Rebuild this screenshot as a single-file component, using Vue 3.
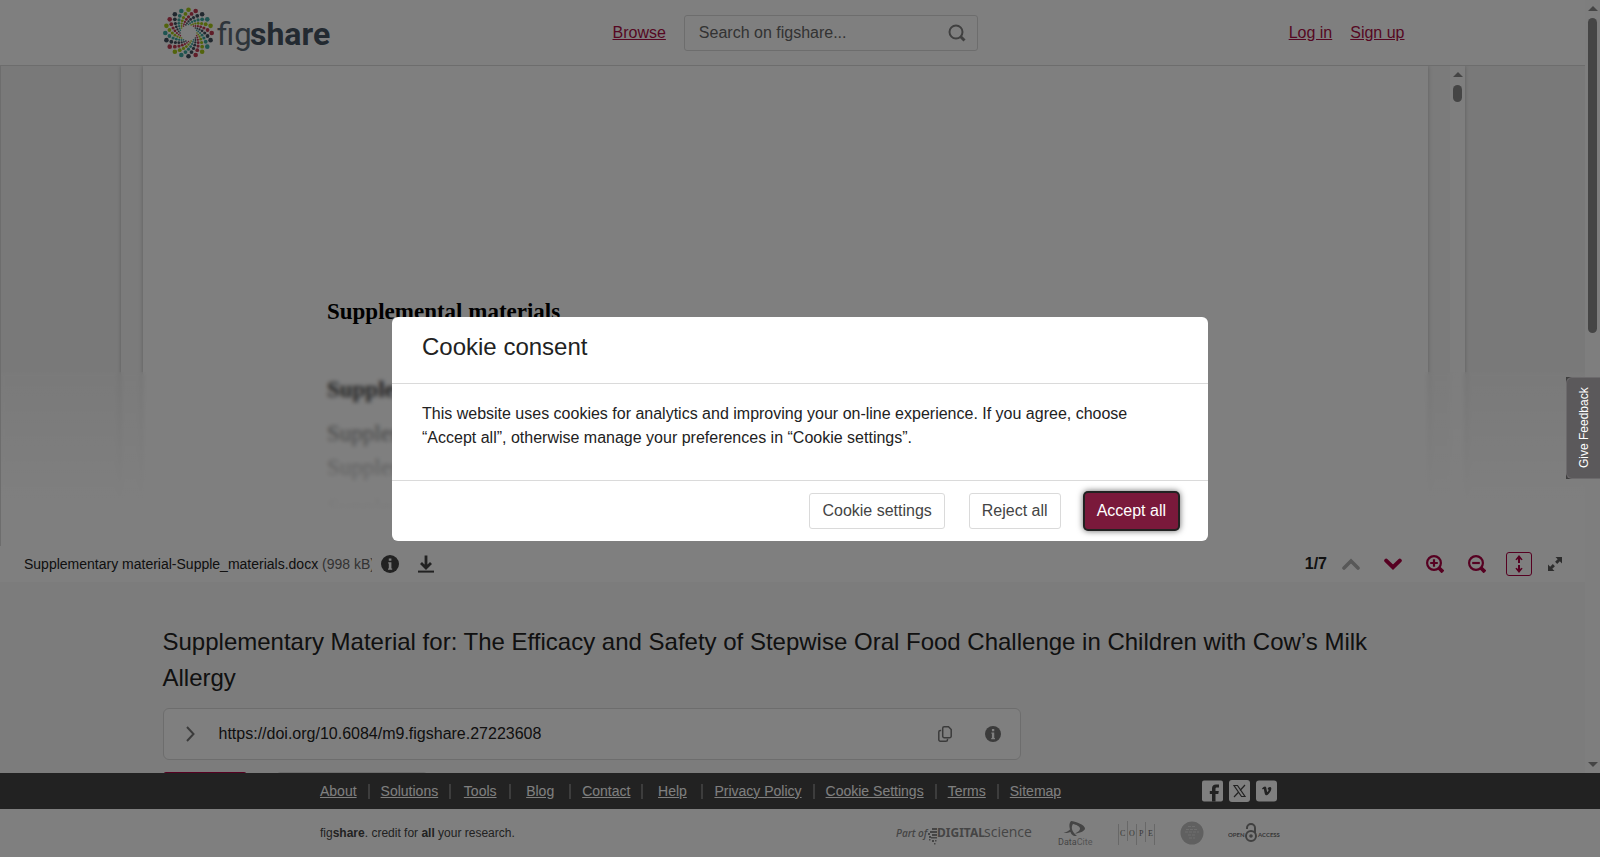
<script setup>
import { ref } from 'vue'

const query = ref('')
const palette = ['#a6c81a', '#c03a52', '#43505e', '#3fa8a0']
const rings = [
  [23.2, 2.3], [19.3, 1.9], [16.2, 1.6], [13.7, 1.4], [11.6, 1.1], [9.9, 0.9], [8.5, 0.8]
]
const dots = []
for (let arm = 0; arm < 20; arm++) {
  rings.forEach(([radius, size], ring) => {
    const angle = ((arm * 18 - ring * 9) * Math.PI) / 180
    dots.push({
      x: 25.5 + radius * Math.sin(angle),
      y: 27 - radius * Math.cos(angle),
      r: size,
      fill: palette[arm % 4]
    })
  })
}

const footerLinks = [
  'About', 'Solutions', 'Tools', 'Blog', 'Contact', 'Help',
  'Privacy Policy', 'Cookie Settings', 'Terms', 'Sitemap'
]
</script>

<template>
  <div class="app">
    <div class="main">
      <div class="content">
        <header class="header">
          <div class="container header-row">
            <a class="logo" href="#" aria-label="figshare">
              <svg width="170" height="53" viewBox="0 0 170 53">
                <circle v-for="(d, i) in dots" :key="i" :cx="d.x" :cy="d.y" :r="d.r" :fill="d.fill" />
                <text x="54" y="39" class="logo-fig">fig</text>
                <text x="87" y="39" class="logo-share">share</text>
              </svg>
            </a>
            <a class="link" href="#">Browse</a>
            <form class="search" @submit.prevent>
              <input v-model="query" type="text" aria-label="Search on figshare" placeholder="Search on figshare..." />
              <button type="submit" aria-label="Search">
                <svg width="18" height="18" viewBox="0 0 18 18" fill="none" stroke="#808080" stroke-width="2">
                  <circle cx="8" cy="8" r="6.500" />
                  <path d="M12.500 12.500l4 4" stroke-width="3" />
                </svg>
              </button>
            </form>
            <nav class="account">
              <a class="link" href="#">Log in</a>
              <a class="link" href="#">Sign up</a>
            </nav>
          </div>
        </header>

        <section class="viewer" aria-label="File preview">
          <div class="frame">
            <div class="sheet-area">
              <article class="sheet">
                <h2>Supplemental materials</h2>
                <p class="strong">Supplemental</p>
                <p class="tight">Supplemental</p>
                <p>Supplemental</p>
                <p>Supplemental</p>
              </article>
            </div>
            <div class="scrollbar">
              <span class="arrow-up"></span>
              <span class="thumb thumb-small"></span>
            </div>
          </div>
          <div class="fade"></div>
        </section>

        <div class="toolbar">
          <div class="filename">Supplementary material-Supple_materials.docx <span>(998 kB)</span></div>
          <button class="icon info" aria-label="File information">
            <svg width="18" height="18" viewBox="0 0 18 18">
              <circle cx="9" cy="9" r="9" fill="#444" />
              <path d="M7.200 7.200h3.200v6.200h.8v1.400H7v-1.400h.8V8.600h-.6zM7.800 3.400h2.600v2.400H7.800z" fill="#fff" />
            </svg>
          </button>
          <button class="icon download" aria-label="Download file">
            <svg width="16" height="18" viewBox="0 0 16 18" fill="none" stroke="#444">
              <path d="M8 0.500v12M3 8l5 5 5-5" stroke-width="2.800" />
              <path d="M0 16.600h16" stroke-width="2" />
            </svg>
          </button>
          <div class="tools">
            <strong>1/7</strong>
            <button class="icon" aria-label="Previous page">
              <svg width="18" height="12" viewBox="0 0 18 12" fill="none" stroke="#b0b0b0" stroke-width="3.600"><path d="M2 10l7-7 7 7" stroke-linecap="round" /></svg>
            </button>
            <button class="icon" aria-label="Next page">
              <svg width="18" height="12" viewBox="0 0 18 12" fill="none" stroke="#ad0042" stroke-width="4"><path d="M2.200 2.600l6.800 6.600 6.800-6.600" stroke-linecap="round" /></svg>
            </button>
            <button class="icon" aria-label="Zoom in">
              <svg width="18" height="18" viewBox="0 0 18 18" fill="none" stroke="#ad0042" stroke-width="2.200">
                <circle cx="8" cy="8" r="6.900" /><path d="M8 4.200v7.600M4.200 8h7.600" /><path d="M13 13l4 4" stroke-width="3.800" />
              </svg>
            </button>
            <button class="icon" aria-label="Zoom out">
              <svg width="18" height="18" viewBox="0 0 18 18" fill="none" stroke="#ad0042" stroke-width="2.200">
                <circle cx="8" cy="8" r="6.900" /><path d="M4.200 8h7.600" /><path d="M13 13l4 4" stroke-width="3.800" />
              </svg>
            </button>
            <button class="icon boxed" aria-label="Fit to height">
              <svg width="8" height="18" viewBox="0 0 8 18" fill="#ad0042">
                <path d="M4 0l3.600 4.400-1 .9L5 4v4H3V4L1.400 5.300l-1-.9zM4 18l3.600-4.400-1-.9L5 14v-4H3v4l-1.600-1.300-1 .9z" />
              </svg>
            </button>
            <button class="icon" aria-label="Full screen">
              <svg width="14" height="14" viewBox="0 0 14 14">
                <path d="M7.500 0H14v6.500L11.800 4.300 9.200 6.900 7.100 4.800l2.600-2.600zM6.500 14H0V7.500l2.200 2.200 2.600-2.600 2.100 2.100-2.600 2.600z" fill="#5a5a5a" />
              </svg>
            </button>
          </div>
        </div>

        <section class="container details">
          <h1>Supplementary Material for: The Efficacy and Safety of Stepwise Oral Food Challenge in Children with Cow’s Milk Allergy</h1>
          <div class="doi">
            <button class="icon" aria-label="Expand citation">
              <svg width="9" height="16" viewBox="0 0 9 16" fill="none" stroke="#777" stroke-width="2"><path d="M1 1l6.500 7L1 15" /></svg>
            </button>
            <span class="doi-text">https://doi.org/10.6084/m9.figshare.27223608</span>
            <button class="icon" aria-label="Copy DOI">
              <svg width="14" height="16" viewBox="0 0 14 16" fill="none" stroke="#777" stroke-width="1.500">
                <path d="M6.500.8h4l2.700 2.700v6.700a1.500 1.500 0 0 1-1.500 1.500H6.200a1.500 1.500 0 0 1-1.500-1.500V2.300A1.500 1.500 0 0 1 6.200.8z" />
                <path d="M3.200 4.500H2.300A1.500 1.500 0 0 0 .8 6v7.700a1.500 1.500 0 0 0 1.500 1.500H8a1.500 1.500 0 0 0 1.500-1.500v-.9" />
              </svg>
            </button>
            <button class="icon" aria-label="DOI information">
              <svg width="16" height="16" viewBox="0 0 18 18">
                <circle cx="9" cy="9" r="9" fill="#777" />
                <path d="M7.200 7.200h3.200v6.200h.8v1.400H7v-1.400h.8V8.600h-.6zM7.800 3.400h2.600v2.400H7.800z" fill="#fff" />
              </svg>
            </button>
          </div>
          <div class="actions">
            <span class="action primary"></span>
            <span class="action"></span>
          </div>
        </section>
      </div>
      <div class="scrollbar">
        <span class="arrow-up"></span>
        <span class="thumb thumb-page"></span>
        <span class="arrow-down"></span>
      </div>
    </div>

    <footer>
      <div class="footer-dark">
        <div class="footer-container">
          <ul class="footer-links">
            <li v-for="label in footerLinks" :key="label"><a href="#">{{ label }}</a></li>
          </ul>
          <div class="social">
            <a href="#" aria-label="Facebook">
              <svg width="21" height="22" viewBox="0 0 21 22">
                <rect y="0.500" width="21" height="21" rx="2" fill="#fff" />
                <path d="M10 21.500V14H7.800v-3H10V8.500C10 6 11.500 4.500 14 4.500h3v3h-2c-1 0-1.500.5-1.500 1.400V11h3.300l-.5 3h-2.800v7.500z" fill="#444" />
              </svg>
            </a>
            <a href="#" aria-label="X">
              <svg width="21" height="22" viewBox="0 0 21 22">
                <rect width="21" height="22" rx="3" fill="#fff" />
                <path d="M5 5.500h3.500l7.500 11h-3.500zM16 5l-5 5.500M9.700 12L5 17" fill="none" stroke="#444" stroke-width="1.200" />
              </svg>
            </a>
            <a href="#" aria-label="Vimeo">
              <svg width="21" height="22" viewBox="0 0 21 22">
                <rect y="0.500" width="21" height="21" rx="3" fill="#fff" />
                <path d="M6 8.500c1-1 2.200-1.900 3-1.900 1 0 1.300.9 1.600 2.800.3 1.600.5 2.500.8 2.500.4 0 1.200-1.300 1.200-2 0-.7-.5-.8-1.100-.6.400-1.600 1.500-2.400 2.600-2.300 1 .1 1.300.8 1.200 1.900-.2 2.300-3.300 6.400-5 6.400-1.300 0-1.500-1.700-1.900-3.300C8 10 8 9 7.500 9c-.3 0-.8.4-.8.4z" fill="#444" />
              </svg>
            </a>
          </div>
        </div>
      </div>
      <div class="footer-light">
        <div class="footer-container">
          <p>fig<b>share</b>. credit for <b>all</b> your research.</p>
          <div class="partners">
            <svg width="138" height="26" viewBox="0 0 138 26" fill="#8a8a8a">
              <text x="0" y="17" class="part-of">Part of</text>
              <path d="M36 8h5v2h-5zM34 11h7v2h-7zM36 14h5v2h-5zM35 17h6v1.500h-6zM32 13h2v2h-2zM33 16h2v2h-2zM36 20h2v2h-2zM39 20h1.500v1.500H39zM33 19h1.500v1.500H33zM38 23h1.500v1.500H38z" />
              <text x="41" y="17" class="digital">DIGITAL</text>
              <text x="88" y="17" class="science">science</text>
            </svg>
            <svg width="36" height="26" viewBox="0 0 36 26" fill="#8a8a8a">
              <path d="M13 1c4 0 14 4 14 7.500 0 2.500-6 5-10 5 3-1.500 5-3 5-5 0-2-4-4-7-4.500-2 3-1 5.500 0 7.500 1 2 4 4.500 4 4.500s-5 1-6.500-4c-2 1-5 1-7 1 3-1 5-2 6.500-3.500C11 6 11 3 13 1z" />
              <text x="0" y="25" class="datacite">Data<tspan fill="#a8a8a8">Cite</tspan></text>
            </svg>
            <svg width="38" height="26" viewBox="0 0 38 26" fill="#707070">
              <path d="M.5 4v21M9.500 1v20M18.500 4v21M27.500 2v20M36.500 4v21" stroke="#d0d0d0" />
              <text x="2" y="16" class="cope">C</text>
              <text x="11" y="16" class="cope">O</text>
              <text x="21" y="16" class="cope">P</text>
              <text x="30" y="16" class="cope">E</text>
            </svg>
            <svg width="24" height="26" viewBox="0 0 24 26">
              <circle cx="12" cy="13" r="11.500" fill="#c0c0c0" />
              <path d="M8 6.500h8M6 9.500h12M5 12h14M8 15h8M9 18h6" stroke="#dcdcdc" stroke-dasharray="3 1" />
            </svg>
            <svg width="52" height="26" viewBox="0 0 52 26" fill="#707070">
              <text x="0" y="17" class="open-access">OPEN</text>
              <g fill="none" stroke="#808080" stroke-width="2"><circle cx="23" cy="16" r="5" /><path d="M19 9V8a4 4 0 0 1 8 0v5" /></g>
              <circle cx="23" cy="16" r="1.800" fill="#808080" />
              <text x="30" y="17" class="open-access">ACCESS</text>
            </svg>
          </div>
        </div>
      </div>
    </footer>

    <div class="backdrop">
      <div class="modal" role="dialog" aria-modal="true" aria-labelledby="consent-title">
        <h2 id="consent-title">Cookie consent</h2>
        <p>This website uses cookies for analytics and improving your on-line experience. If you agree, choose “Accept all”, otherwise manage your preferences in “Cookie settings”.</p>
        <div class="modal-actions">
          <button>Cookie settings</button>
          <button>Reject all</button>
          <button class="accept">Accept all</button>
        </div>
      </div>
    </div>

    <div class="feedback-corner">
      <button class="feedback">Give Feedback</button>
    </div>
  </div>
</template>

<style>
body { margin: 0; overflow: hidden; }
</style>

<style scoped>
* { box-sizing: border-box; }
.app {
  display: flex;
  flex-direction: column;
  height: 100vh;
  background: #f9f9f9;
  color: #222;
  font: 16px/24px "Liberation Sans", Arial, sans-serif;
}
button, input { font: inherit; color: inherit; }
h1, h2, p, ul { margin: 0; padding: 0; font-weight: normal; }
svg { display: block; }
.main { display: flex; flex: 1; min-height: 0; }
.content { flex: 1; min-width: 0; overflow: hidden; }
.container { width: calc(100% - 48px); max-width: 1260px; margin: 0 auto; }
.header { height: 66px; background: #fff; border-bottom: 1px solid #dadada; }
.header-row { display: flex; align-items: center; height: 65px; padding-right: 18px; }
.logo { flex: 0 1 450px; }
.logo-fig { font: 400 31px Roboto, sans-serif; fill: #5d6a76; }
.logo-share { font: 700 32px Roboto, sans-serif; fill: #465462; }
.link { color: #ad0f45; text-decoration: underline; }
.search {
  display: flex;
  align-items: center;
  width: 294px;
  height: 36px;
  margin-left: 18px;
  padding: 0 11px 0 14px;
  border: 1px solid #dadada;
  border-radius: 3px;
}
.search input { flex: 1; min-width: 0; padding: 0; border: 0; background: none; outline: 0; }
.search input::placeholder { color: #666; opacity: 1; }
.search button, .icon { padding: 0; border: 0; background: none; }
.account { display: flex; gap: 18px; margin-left: auto; }

.viewer {
  position: relative;
  display: flex;
  height: 480px;
  border-left: 1px solid #dadada;
  background: #f3f3f3;
}
.frame {
  display: flex;
  flex: 1;
  max-width: 1344px;
  margin: 0 auto;
  background: #f6f6f6;
  box-shadow: 0 0 4px rgba(0, 0, 0, 0.25);
  clip-path: inset(0 -6px);
}
.sheet-area { flex: 1; padding: 0 22px; }
.sheet {
  height: 472px;
  padding: 232px 184px 0;
  background: #fff;
  color: #000;
  box-shadow: 0 0 4px rgba(0, 0, 0, 0.25);
  font: 23px/28px "Liberation Serif", "Times New Roman", serif;
}
.sheet h2 { margin-bottom: 50px; font-size: 23px; font-weight: bold; }
.sheet p { margin-bottom: 12px; }
.sheet .strong { margin-bottom: 16px; font-weight: bold; }
.sheet .tight { margin-bottom: 6px; }
.fade {
  position: absolute;
  inset: 306px 0 0;
  background: linear-gradient(rgba(255, 255, 255, 0.15), #fff 80%);
  backdrop-filter: blur(2px);
}
.scrollbar { display: flex; flex-direction: column; align-items: center; width: 15px; padding: 6px 0; background: #fcfcfc; }
.arrow-up, .arrow-down { border: 5px solid transparent; border-top: 0; border-bottom-color: #8b8b8b; }
.arrow-down { margin-top: auto; border-top: 5px solid #8b8b8b; border-bottom: 0; }
.thumb { width: 9px; margin-top: 7px; border-radius: 5px; background: #8b8b8b; }
.thumb-small { height: 17px; margin-top: 8px; }
.thumb-page { height: 315px; }

.toolbar { display: flex; align-items: center; height: 36px; padding: 0 23px 0 24px; background: #fff; }
.filename { width: 348px; overflow: hidden; white-space: nowrap; font-size: 14px; }
.filename span { color: #666; }
.info { margin-left: 9px; }
.download { margin-left: 19px; }
.tools { display: flex; align-items: center; gap: 24px; margin-left: auto; }
.tools strong { margin-right: -9px; }
.boxed { display: grid; place-items: center; width: 26px; height: 24px; margin: 0 -8px 0 -4px; border: 1px solid #ad0042; border-radius: 3px; }

.details { padding-top: 42px; }
.details h1 { font-size: 24px; line-height: 36px; }
.doi {
  display: flex;
  align-items: center;
  gap: 33px;
  width: 858px;
  max-width: 100%;
  height: 52px;
  margin-top: 12px;
  padding: 0 19px 0 22px;
  border: 1px solid #dadada;
  border-radius: 6px;
  background: #fff;
}
.doi-text { flex: 1; margin-left: -9px; }
.actions { display: flex; gap: 30px; margin-top: 12px; }
.action { width: 150px; height: 36px; border: 1px solid #dadada; border-radius: 3px; background: #fff; }
.primary { width: 84px; border-color: #ad0042; background: #ad0042; }

.footer-dark { background: #444; }
.footer-light { background: #fff; }
.footer-container { display: flex; align-items: center; justify-content: space-between; max-width: 960px; height: 48px; margin: 0 auto; }
.footer-dark .footer-container { height: 36px; padding-right: 3px; }
.footer-links { display: flex; list-style: none; font-size: 14px; line-height: 15px; }
.footer-links li { min-width: 60px; padding: 0 11px; border-right: 2px solid #7a7a7a; text-align: center; white-space: nowrap; }
.footer-links li:first-child { min-width: 0; padding-left: 0; }
.footer-links li:last-child { border: 0; }
.footer-links a { color: #fff; }
.social { display: flex; gap: 6px; }
.footer-light p { color: #444; font-size: 12px; line-height: 18px; }
.partners { display: flex; align-items: center; gap: 24px; }
.part-of { font: italic 600 10px "Open Sans", sans-serif; }
.digital { font: bold 12px "Noto Sans", sans-serif; }
.science { font: 14px "Open Sans", sans-serif; }
.datacite { font: 9px Roboto, sans-serif; }
.cope { font: 8px "Liberation Serif", serif; }
.open-access { font: bold 6px Lato, sans-serif; }

.backdrop {
  position: fixed;
  inset: 0;
  display: flex;
  align-items: center;
  justify-content: center;
  background: rgba(0, 0, 0, 0.5);
}
.modal { width: 816px; max-width: 100%; border-radius: 6px; background: #fff; }
.modal h2 { padding: 12px 30px 18px; border-bottom: 1px solid #dadada; font-size: 24px; line-height: 36px; }
.modal p { padding: 18px 30px 30px; border-bottom: 1px solid #dadada; }
.modal-actions { display: flex; justify-content: flex-end; gap: 24px; padding: 12px 30px; }
.modal-actions button { height: 36px; padding: 0 12px; border: 1px solid #dadada; border-radius: 3px; background: #fff; color: #444; }
.modal-actions .accept {
  border: 0;
  background: #7a193b;
  color: #fff;
  box-shadow: 0 0 0 2px #222, 0 0 6px 2px rgba(0, 0, 0, 0.6);
}
.feedback-corner { position: fixed; top: 377px; right: 0; background: #3e3e3e; }
.feedback {
  display: block;
  width: 34px;
  height: 102px;
  padding: 0;
  border: 1px solid #6c6a6c;
  border-left: 0;
  border-radius: 0 6px 6px 0;
  background: #5b595b;
  color: #fff;
  font-size: 12px;
  writing-mode: vertical-rl;
  transform: rotate(180deg);
}
</style>
